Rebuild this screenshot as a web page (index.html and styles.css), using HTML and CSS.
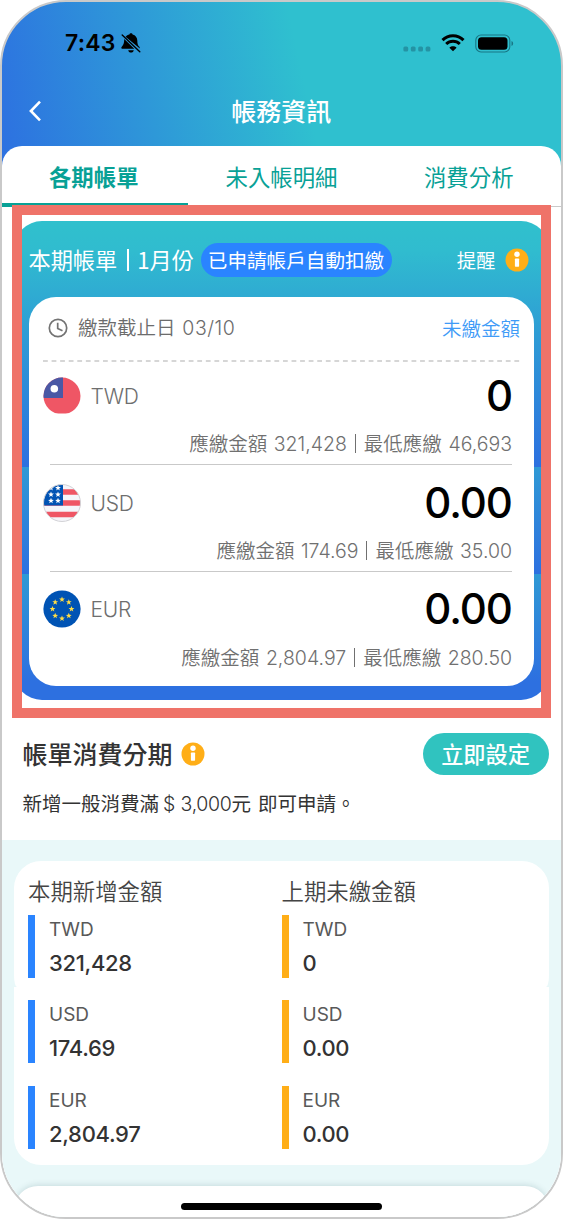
FILE: index.html
```html
<!DOCTYPE html>
<html lang="zh-Hant">
<head>
<meta charset="utf-8">
<title>帳務資訊</title>
<link rel="stylesheet" href="styles.css">
</head>
<body>
<svg class="defs" width="0" height="0">
  <defs>
    <clipPath id="round"><circle cx="19" cy="19" r="18.5"/></clipPath>
    <path id="star" d="M0-3 .8-1 2.9-.9 1.2.4 1.8 2.5 0 1.3-1.8 2.5-1.2.4-2.9-.9-.8-1z"/>
    <symbol id="info" viewBox="0 0 24 24"><circle cx="12" cy="12" r="11.5" fill="#ffae17"/><circle cx="12" cy="6.2" r="2.7" fill="#fff"/><rect x="9.9" y="10.5" width="4.2" height="8.2" rx=".7" fill="#fff"/></symbol>
  </defs>
</svg>
<div class="phone">
  <header class="header">
    <div class="status">
      <span class="time">7:43</span>
      <svg class="bell" viewBox="0 0 20 20" width="20" height="20"><path d="M4.600 3.800C5.500 2.400 7 1.700 8.400 1.400 8.500.6 9.200.2 10 .2s1.500.4 1.600 1.200c2.900.7 4.700 3 4.700 6 0 3.700.7 4.900 1.800 6.200.4.500.7.9.7 1.800zM3.200 6 13.300 15.800H1.900c-1.600 0-2-1-1.300-1.900C2.300 12 3.200 10.700 3.200 6zM7.200 17.200h5.600c-.3 1.500-1.400 2.400-2.800 2.400s-2.500-.9-2.800-2.400z"/><path d="M1.200 2 18.800 18.800" stroke="#000" stroke-width="1.400" stroke-linecap="round"/></svg>
      <span class="grow"></span>
      <svg class="dots" viewBox="0 0 28 6" width="28" height="6"><g fill="#2493a4"><rect x=".4" y=".6" width="4.800" height="4.800" rx="1.500"/><rect x="7.800" y=".6" width="4.800" height="4.800" rx="1.500"/><rect x="15.200" y=".6" width="4.800" height="4.800" rx="1.500"/><rect x="22.600" y=".6" width="4.800" height="4.800" rx="1.500"/></g></svg>
      <svg class="wifi" viewBox="0 0 24 18" width="24" height="18"><path d="M1.500 6.100C7.400.2 16.600.2 22.500 6.100M5.200 10C9 6.300 15 6.300 18.800 10" fill="none" stroke="#000" stroke-width="3"/><path d="M12 17.300 8.400 13.700c2.100-1.900 5.100-1.900 7.200 0z"/></svg>
      <svg class="battery" viewBox="0 0 39 19" width="39" height="19"><rect x=".8" y="1" width="34" height="17" rx="5.200" fill="none" stroke="#187785" stroke-width="1.100"/><rect x="3" y="3.200" width="29.500" height="12.600" rx="3.500"/><path d="M36.500 7c2.200.7 2.200 4.300 0 5z" fill="#187785"/></svg>
    </div>
    <div class="titlebar">
      <svg class="back" viewBox="0 0 14 22" width="14" height="22"><path d="M12 1.700 2.900 11l9.100 9.300" fill="none" stroke="#fff" stroke-width="2.600"/></svg>
      <h1 class="title">帳務資訊</h1>
    </div>
  </header>
  <main class="sheet">
    <nav class="tabs">
      <span class="tab tab-active">各期帳單</span>
      <span class="tab">未入帳明細</span>
      <span class="tab tab-last">消費分析</span>
    </nav>
    <section class="highlight">
      <div class="bill">
        <div class="bill-head">
          <span class="bill-title">本期帳單<i class="bar"></i>1月份</span>
          <span class="pill">已申請帳戶自動扣繳</span>
          <span class="grow"></span>
          <span class="remind">提醒</span>
          <svg class="info" width="24" height="24"><use href="#info"/></svg>
        </div>
        <div class="bill-card">
          <div class="due">
            <svg viewBox="0 0 20 20" width="20" height="20"><g fill="none" stroke="#737373" stroke-width="1.700"><circle cx="10" cy="10" r="8.700"/><path d="M9.700 4.700V10.500L14.500 12.800"/></g></svg>
            <span class="due-text">繳款截止日 <b class="num">03/10</b></span>
            <span class="unpaid">未繳金額</span>
          </div>
          <svg class="dash" width="479" height="2"><path d="M0 1H479" stroke="#c9c9c9" stroke-width="1.600" stroke-dasharray="4.800 3.770"/></svg>
          <div class="cur">
            <div class="cur-main">
              <svg viewBox="0 0 38 38" width="38" height="38"><g clip-path="url(#round)"><path fill="#ef5665" d="M0 0h38v36.600H0z"/><path fill="#4a58a5" d="M0 0h20v21H0z"/><circle cx="11.300" cy="11.700" r="3.800" fill="#fff"/></g></svg>
              <span class="code">TWD</span><span class="amount">0</span>
            </div>
            <div class="cur-sub">應繳金額 <b class="num">321,428</b><i class="bar"></i>最低應繳 <b class="num">46,693</b></div>
          </div>
          <div class="cur">
            <div class="cur-main">
              <svg viewBox="0 0 38 38" width="38" height="38"><g clip-path="url(#round)"><path fill="#f5f5fa" d="M0 0h38v38H0z"/><path stroke="#ef5665" stroke-width="5.600" d="M0 8h38M0 19h38M0 30.500h38"/><path fill="#0053b4" d="M0 0h20v21.500H0z"/><g fill="#fff"><use href="#star" x="15" y="4"/><use href="#star" x="8" y="4"/><use href="#star" x="8" y="10.500"/><use href="#star" x="15" y="10.500"/><use href="#star" x="8" y="16.800"/><use href="#star" x="15" y="16.800"/></g></g><circle cx="19" cy="19" r="18.500" fill="none" stroke="#d2d2d6"/></svg>
              <span class="code">USD</span><span class="amount">0.00</span>
            </div>
            <div class="cur-sub">應繳金額 <b class="num">174.69</b><i class="bar"></i>最低應繳 <b class="num">35.00</b></div>
          </div>
          <div class="cur">
            <div class="cur-main">
              <svg viewBox="0 0 38 38" width="38" height="38"><circle cx="19" cy="19" r="18.600" fill="#0053b4"/><g fill="#ffdd45"><use href="#star" x="19" y="9.500"/><use href="#star" x="19" y="28.500"/><use href="#star" x="9.500" y="19"/><use href="#star" x="28.500" y="19"/><use href="#star" x="12.200" y="12.200"/><use href="#star" x="25.800" y="12.200"/><use href="#star" x="12.200" y="25.800"/><use href="#star" x="25.800" y="25.800"/></g></svg>
              <span class="code">EUR</span><span class="amount">0.00</span>
            </div>
            <div class="cur-sub">應繳金額 <b class="num">2,804.97</b><i class="bar"></i>最低應繳 <b class="num">280.50</b></div>
          </div>
        </div>
      </div>
    </section>
    <section class="split">
      <div class="split-head">
        <h2 class="split-title">帳單消費分期</h2>
        <svg width="24" height="24"><use href="#info"/></svg>
        <span class="grow"></span>
        <span class="button">立即設定</span>
      </div>
      <p class="note">新增一般消費滿<b class="num dollar">$</b><b class="num">3,000</b>元 即可申請。</p>
    </section>
    <section class="summary">
      <div class="sum-top">
        <div class="col"><h3 class="sum-title">本期新增金額</h3><div class="item"><span class="label">TWD</span><span class="value">321,428</span></div></div>
        <div class="col col-last"><h3 class="sum-title">上期未繳金額</h3><div class="item"><span class="label">TWD</span><span class="value">0</span></div></div>
      </div>
      <div class="sum-rest">
        <div class="col"><div class="item"><span class="label">USD</span><span class="value">174.69</span></div><div class="item"><span class="label">EUR</span><span class="value">2,804.97</span></div></div>
        <div class="col col-last"><div class="item"><span class="label">USD</span><span class="value">0.00</span></div><div class="item"><span class="label">EUR</span><span class="value">0.00</span></div></div>
      </div>
      <div class="next"></div>
    </section>
  </main>
  <div class="home"></div>
</div>
</body>
</html>
```
FILE: styles.css
```css
* { box-sizing: border-box; }
body { margin: 0; background: #fff; font-family: "Noto Sans CJK TC", sans-serif; line-height: 1; }
h1, h2, h3, p { margin: 0; font-weight: 400; }
svg { display: block; flex: none; }
.defs { position: absolute; }
.grow { flex: 1; }
.num { font-family: Inter, sans-serif; font-weight: 300; }

.phone { position: relative; width: 563px; height: 1219px; border: 2px solid #c9c9c9; border-radius: 66px; overflow: hidden; background: linear-gradient(78deg, #2d70e1 0, #2fc0cf 54%) 0 0 / 100% 170px no-repeat #fff; }
.header { height: 144px; }
.status { display: flex; align-items: center; height: 82px; padding: 0 47px 0 63px; }
.time { width: 50px; font: 600 23px/1 Inter, sans-serif; letter-spacing: 0.2px; white-space: nowrap; }
.bell { margin-left: 6px; }
.dots { margin-top: 12px; }
.wifi { margin: 0 10px; }
.battery { margin-top: 1px; }
.titlebar { display: flex; align-items: center; height: 54px; padding-left: 25.5px; }
.title { flex: 1; padding: 0 40px 1px 0; text-align: center; color: #fff; font-size: 25px; font-weight: 500; }

.sheet { height: 1071px; background: #fff; border-radius: 20px 20px 0 0; overflow: hidden; }
.tabs { display: grid; grid-template-columns: 185.5px 1fr 185.5px; height: 61px; border-bottom: 1px solid #c9c9c9; }
.tab { height: 61px; padding-top: 19px; text-align: center; color: #08a196; font-size: 22.4px; }
.tab-active { padding-right: 2px; font-weight: 600; border-bottom: 4px solid #08a196; }
.tab-last { padding-left: 1px; }

.highlight { position: relative; height: 513px; margin: -2px 10px 0 9.5px; border: 10px solid #ef7369; overflow: hidden; background: #fff; }
.bill { height: 479px; margin: 6px -8px 0; padding: 0 15px; border-radius: 28px; background: linear-gradient(#30c0cd 0, #30bccf 12%, #2e9cd5 46%, #2c70e0 100%) 0 0 / 100% 246px no-repeat, linear-gradient(#2f99d5, #2d70e0) 0 246px / 100% 107px no-repeat, linear-gradient(#2f99d5, #2d70e0 85%) 0 353px / 100% 126px no-repeat; }
.bill-head { display: flex; align-items: center; height: 76px; padding: 1px 5.5px 0 0; color: #fff; }
.bill-title { width: 172px; font-size: 22.2px; white-space: nowrap; }
.bar { display: inline-block; width: 1px; height: 1em; margin: 0 8px; background: currentColor; vertical-align: -2px; }
.bill-title .bar { width: 2px; margin: 0 8px 0 10px; }
.pill { display: flex; align-items: center; justify-content: center; width: 191px; height: 34px; border-radius: 17px; background: #2a84ff; font-size: 19.6px; font-weight: 400; }
.remind { margin-right: 9px; font-size: 19.4px; font-weight: 400; }

.bill-card { height: 389px; border-radius: 27px; background: #fff; padding: 0 14px; }
.due { display: flex; align-items: center; height: 62px; padding-left: 5.5px; color: #6c6c6c; font-size: 19.5px; font-weight: 350; }
.due-text { flex: 1; margin-left: 10px; word-spacing: 2.5px; }
.due .num { letter-spacing: 0.5px; }
.unpaid { color: #3f9bf7; font-weight: 350; }
.dash { margin-top: 1px; }
.cur { height: 107px; padding-right: 8px; }
.cur-main { display: flex; align-items: center; height: 65px; padding-top: 3px; }
.cur:last-child .cur-main { padding-top: 1px; }
.code { margin-left: 10px; color: #6e6e6e; font: 300 21px/1 Inter, sans-serif; letter-spacing: -0.2px; }
.amount { flex: 1; text-align: right; font: 450 42px/1 Inter, sans-serif; letter-spacing: -1px; }
.cur-sub { height: 38px; margin-left: 7px; padding-top: 6px; border-bottom: 1.500px solid #c9c9c9; text-align: right; color: #707070; font-size: 19.5px; font-weight: 350; white-space: nowrap; word-spacing: 2.2px; }
.cur:last-child .cur-sub { border: 0; }

.split { height: 122px; padding: 14px 12.5px 0 20.5px; color: #333; }
.split-head { display: flex; align-items: center; height: 43px; }
.split-title { margin-right: 8.5px; font-size: 25px; font-weight: 500; }
.button { display: flex; align-items: center; justify-content: center; width: 126px; height: 42px; border-radius: 21px; background: #30c3bf; color: #fff; font-size: 22.2px; font-weight: 500; }
.note { margin-top: 18px; font-size: 19.500px; word-spacing: 2.5px; }
.note .num { font-weight: 350; letter-spacing: -0.3px; }
.note .dollar { margin: 0 5.5px 0 4px; }

.summary { height: 380px; padding: 21px 12px 0; background: #e9f8f9; }
.sum-top, .sum-rest { display: grid; grid-template-columns: 253.5px 1fr; background: #fff; padding: 0 14px; }
.sum-top { height: 126px; padding-top: 18px; border-radius: 27px 27px 3px 3px / 27px 27px 12px 12px; }
.sum-rest { height: 178px; padding-top: 13px; border-radius: 0 0 27px 27px; }
.sum-title { height: 36px; color: #444; font-size: 22.4px; font-weight: 350; }
.item { display: flex; flex-direction: column; height: 63px; margin-bottom: 23px; padding-left: 14px; border-left: 7px solid #2a84ff; }
.col-last .item { border-color: #ffae17; }
.label { padding-top: 5px; color: #595959; font: 400 19px/1 Inter, sans-serif; }
.value { padding-top: 12.5px; color: #333; font: 450 22px/1 Inter, sans-serif; letter-spacing: -0.3px; }
.col-last .value { letter-spacing: -0.4px; }
.next { height: 60px; margin-top: 21px; border-radius: 24px; background: #fff; box-shadow: 0 -1px 6px rgba(0, 60, 70, .15); }
.home { position: absolute; left: 179px; top: 1201px; width: 201px; height: 7px; border-radius: 4px; background: #000; }
```
